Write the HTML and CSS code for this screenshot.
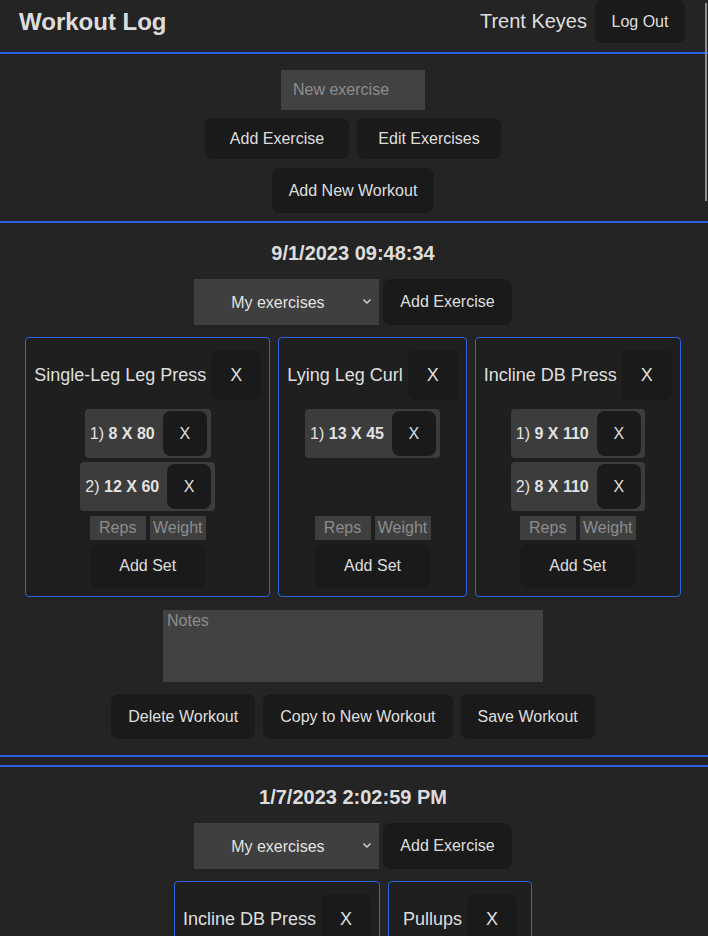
FILE: index.html
```html
<!DOCTYPE html>
<html lang="en">
<head>
<meta charset="utf-8">
<title>Workout Log</title>
<link rel="stylesheet" href="styles.css">
</head>
<body>
<div class="scroll-thumb"></div>
<header class="topbar">
  <h1 class="brand">Workout Log</h1>
  <div class="user">
    <span class="user-name">Trent Keyes</span>
    <button class="btn btn-logout">Log Out</button>
  </div>
</header>

<section class="manage">
  <input class="new-exercise" type="text" placeholder="New exercise">
  <div class="manage-row">
    <button class="btn btn-fixed">Add Exercise</button>
    <button class="btn btn-fixed">Edit Exercises</button>
  </div>
  <button class="btn">Add New Workout</button>
</section>

<section class="workout">
  <h2 class="workout-date">9/1/2023 09:48:34</h2>
  <div class="picker">
    <div class="select-wrap">
      <select class="exercise-select"><option>My exercises</option></select>
      <svg class="chevron" width="10" height="7" viewBox="0 0 10 7"><polyline points="1.5,1.5 5,5 8.5,1.5" fill="none" stroke="#d8d8d8" stroke-width="1.4"/></svg>
    </div>
    <button class="btn">Add Exercise</button>
  </div>
  <div class="cards">
    <div class="card">
      <div class="card-title"><span>Single-Leg Leg Press</span><button class="btn btn-x-lg">X</button></div>
      <div class="sets">
        <div class="set"><span>1) <b>8 X 80</b></span><button class="btn btn-x">X</button></div>
        <div class="set"><span>2) <b>12 X 60</b></span><button class="btn btn-x">X</button></div>
      </div>
      <div class="set-inputs"><input class="small-input" placeholder="Reps"><input class="small-input" placeholder="Weight"></div>
      <button class="btn btn-addset">Add Set</button>
    </div>
    <div class="card">
      <div class="card-title"><span>Lying Leg Curl</span><button class="btn btn-x-lg">X</button></div>
      <div class="sets">
        <div class="set"><span>1) <b>13 X 45</b></span><button class="btn btn-x">X</button></div>
      </div>
      <div class="set-inputs"><input class="small-input" placeholder="Reps"><input class="small-input" placeholder="Weight"></div>
      <button class="btn btn-addset">Add Set</button>
    </div>
    <div class="card">
      <div class="card-title"><span>Incline DB Press</span><button class="btn btn-x-lg">X</button></div>
      <div class="sets">
        <div class="set"><span>1) <b>9 X 110</b></span><button class="btn btn-x">X</button></div>
        <div class="set"><span>2) <b>8 X 110</b></span><button class="btn btn-x">X</button></div>
      </div>
      <div class="set-inputs"><input class="small-input" placeholder="Reps"><input class="small-input" placeholder="Weight"></div>
      <button class="btn btn-addset">Add Set</button>
    </div>
  </div>
  <textarea class="notes" placeholder="Notes"></textarea>
  <div class="actions">
    <button class="btn">Delete Workout</button>
    <button class="btn">Copy to New Workout</button>
    <button class="btn">Save Workout</button>
  </div>
</section>

<section class="workout">
  <h2 class="workout-date">1/7/2023 2:02:59 PM</h2>
  <div class="picker">
    <div class="select-wrap">
      <select class="exercise-select"><option>My exercises</option></select>
      <svg class="chevron" width="10" height="7" viewBox="0 0 10 7"><polyline points="1.5,1.5 5,5 8.5,1.5" fill="none" stroke="#d8d8d8" stroke-width="1.4"/></svg>
    </div>
    <button class="btn">Add Exercise</button>
  </div>
  <div class="cards">
    <div class="card">
      <div class="card-title"><span>Incline DB Press</span><button class="btn btn-x-lg">X</button></div>
      <div class="sets">
        <div class="set"><span>1) <b>10 X 100</b></span><button class="btn btn-x">X</button></div>
      </div>
      <div class="set-inputs"><input class="small-input" placeholder="Reps"><input class="small-input" placeholder="Weight"></div>
      <button class="btn btn-addset">Add Set</button>
    </div>
    <div class="card">
      <div class="card-title"><span>Pullups</span><button class="btn btn-x-lg">X</button></div>
      <div class="sets">
        <div class="set"><span>1) <b>10 X 0</b></span><button class="btn btn-x">X</button></div>
      </div>
      <div class="set-inputs"><input class="small-input" placeholder="Reps"><input class="small-input" placeholder="Weight"></div>
      <button class="btn btn-addset">Add Set</button>
    </div>
  </div>
  <textarea class="notes" placeholder="Notes"></textarea>
  <div class="actions">
    <button class="btn">Delete Workout</button>
    <button class="btn">Copy to New Workout</button>
    <button class="btn">Save Workout</button>
  </div>
</section>
</body>
</html>
```

FILE: styles.css
```css
* { box-sizing: border-box; }

html, body {
  margin: 0;
  background: #242424;
}

body {
  font-family: "Liberation Sans", Arial, sans-serif;
  font-size: 16px;
  color: rgba(255, 255, 255, 0.87);
}

button, input, select, textarea {
  font-family: "Liberation Sans", Arial, sans-serif;
  font-size: 16px;
  color: rgba(255, 255, 255, 0.87);
}

.scroll-thumb {
  position: fixed;
  top: 3px;
  right: 1px;
  width: 2px;
  height: 198px;
  background: #8e8e8e;
  z-index: 10;
}

.btn {
  height: 45px;
  padding: 0 16px;
  border: 1px solid transparent;
  border-radius: 8px;
  background: #1a1a1a;
  line-height: 1;
  cursor: pointer;
  white-space: nowrap;
}

/* header */
.topbar {
  display: flex;
  justify-content: space-between;
  align-items: center;
  height: 54px;
  padding: 0 23px 9px 19px;
  border-bottom: 2px solid #2a62e2;
}

.brand {
  margin: 0;
  font-size: 24px;
  font-weight: bold;
  line-height: 28px;
}

.user {
  display: flex;
  align-items: center;
  gap: 8px;
}

.user-name { font-size: 20px; }

.btn-logout {
  height: 43px;
  width: 90px;
  padding: 0;
}

/* top management section */
.manage {
  display: flex;
  flex-direction: column;
  align-items: center;
  padding: 16px 2px 8px 0;
}

.new-exercise {
  width: 144px;
  height: 40px;
  padding: 0 12px;
  border: none;
  background: #424242;
  margin-bottom: 8px;
  outline: none;
}

.new-exercise::placeholder,
.small-input::placeholder,
.notes::placeholder { color: #8d8d8d; }

.manage-row {
  display: flex;
  gap: 8px;
  margin-bottom: 9px;
}

.btn-fixed {
  width: 144px;
  height: 41px;
  padding: 0;
}

/* workout */
.workout {
  border-top: 2px solid #2a62e2;
  border-bottom: 2px solid #2a62e2;
  margin-bottom: 8px;
  padding: 18px 2px 16px 0;
  display: flex;
  flex-direction: column;
  align-items: center;
}

.workout-date {
  margin: 0 0 14px;
  font-size: 20px;
  font-weight: bold;
  line-height: 24px;
}

.picker {
  display: flex;
  gap: 4px;
  align-items: stretch;
}

.select-wrap {
  position: relative;
  width: 185px;
  height: 46px;
}

.exercise-select {
  appearance: none;
  -webkit-appearance: none;
  width: 100%;
  height: 100%;
  border: none;
  border-radius: 0;
  background: #3f3f3f;
  padding: 0 18px 0 0;
  text-align: center;
  text-align-last: center;
  outline: none;
}

.chevron {
  position: absolute;
  right: 7px;
  top: 19px;
}

.picker .btn {
  height: 46px;
}

.cards {
  display: flex;
  justify-content: center;
  gap: 8px;
  margin-top: 12px;
}

.card {
  display: flex;
  flex-direction: column;
  align-items: center;
  border: 1px solid #2a62e2;
  border-radius: 4px;
  background: #1f1f1f;
  padding: 12px 8px 8px;
}

.card-title {
  display: flex;
  align-items: center;
  gap: 5px;
  font-size: 18px;
  margin-bottom: 9px;
}

.btn-x-lg {
  width: 50px;
  height: 50px;
  padding: 0;
  font-size: 18px;
}

.sets {
  flex: 1;
  display: flex;
  flex-direction: column;
  align-items: center;
  gap: 4px;
}

.set {
  display: flex;
  align-items: center;
  gap: 8px;
  padding: 2px 4px 2px 5px;
  background: #3c3c3c;
  border-radius: 4px;
  white-space: nowrap;
}

.btn-x {
  width: 44px;
  height: 45px;
  padding: 0;
}

.set-inputs {
  display: flex;
  gap: 4px;
  margin-top: 5px;
}

.small-input {
  width: 56px;
  height: 24px;
  padding: 0;
  border: none;
  background: #3f3f3f;
  text-align: center;
  outline: none;
}

.btn-addset {
  width: 116px;
  height: 44px;
  padding: 0;
  margin-top: 4px;
}

.notes {
  display: block;
  width: 380px;
  height: 72px;
  margin-top: 13px;
  padding: 2px 4px;
  border: none;
  background: #424242;
  resize: none;
  outline: none;
}

.actions {
  display: flex;
  gap: 8px;
  margin-top: 12px;
}
```
